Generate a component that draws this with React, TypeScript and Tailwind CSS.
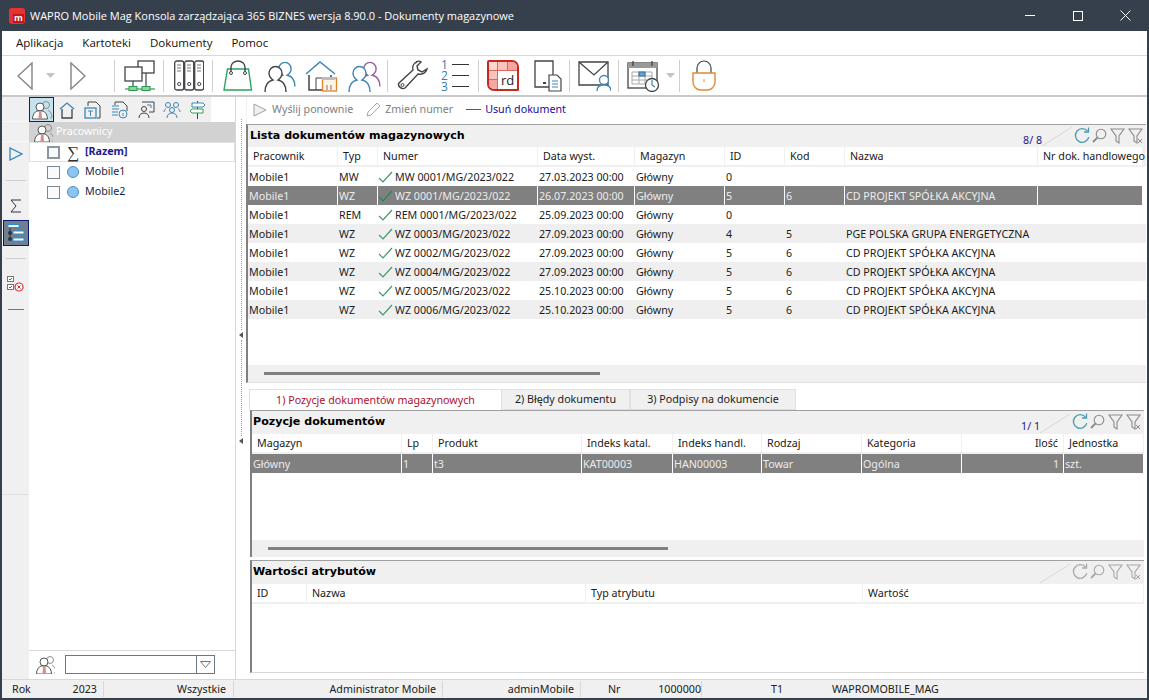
import type { ReactNode } from "react";

const ink = "#404448";
const blue = "#3d86b5";

function Svg({ w, h, className, children }: { w: number; h: number; className?: string; children: ReactNode }) {
  return (
    <svg width={w} height={h} viewBox={`0 0 ${w} ${h}`} fill="none" className={`shrink-0 ${className ?? ""}`}>
      {children}
    </svg>
  );
}

function Sep({ className }: { className: string }) {
  return <div className={`w-px h-[32px] bg-[#cfcfcf] shrink-0 ${className}`} />;
}

function Person({ x, y, s = 1, stroke = ink, bg = "#fff" }: { x: number; y: number; s?: number; stroke?: string; bg?: string }) {
  return (
    <g transform={`translate(${x} ${y}) scale(${s})`} stroke={stroke} strokeWidth={1.4 / s}>
      <path d="M1 28c0-7 3-11 8-12 -3-2-4-4-4-7a6.500 6.500 0 0 1 13 0c0 3-1 5-4 7 5 1 8 5 8 12" fill={bg} />
    </g>
  );
}

function Funnel({ x, color }: { x: number; color: string }) {
  return <path d={`M${x} 3h13l-5 7v7l-3-2v-5z`} stroke={color} strokeWidth="1.1" />;
}

function PanelTools({ color, refresh }: { color: string; refresh: string }) {
  return (
    <Svg w={74} h={20}>
      <path d="M15.500 5.200a6.800 6.800 0 1 0 1.300 6" stroke={refresh} strokeWidth="1.300" />
      <path d="M16.500 1.500v4.500h-4.500" stroke={refresh} strokeWidth="1.300" />
      <circle cx="29" cy="8" r="4.800" stroke={color} strokeWidth="1.100" />
      <path d="M25.500 11.500l-4.500 4.500" stroke={color} strokeWidth="1.800" />
      <Funnel x={39} color={color} />
      <Funnel x={57} color={color} />
      <path d="M66 13l4 4M70 13l-4 4" stroke={color} strokeWidth="1" />
    </Svg>
  );
}

function PanelTitle({ title, count, toolColor, refresh, pad }: { title: string; count?: string; toolColor: string; refresh: string; pad: string }) {
  return (
    <div className={`shrink-0 bg-[#f0f0f0] flex items-center ${pad}`}>
      <span className="font-['DejaVu_Sans'] font-bold text-[11.100px] text-black">{title}</span>
      <div className="ml-auto flex items-center">
        {count && <span className="text-[#1a1a8c] mt-[9px]">{count}</span>}
        <Svg w={30} h={21}>
          <path d="M0 21L30 2" stroke="#d8d8d8" />
        </Svg>
        <PanelTools color={toolColor} refresh={refresh} />
      </div>
    </div>
  );
}

type Col = { label: string; width: string; right?: boolean };

function HeaderRow({ cols }: { cols: Col[] }) {
  return (
    <div className="flex h-[21px] shrink-0 bg-[#f0f0f0] gap-px pb-[2px] pt-[1px]">
      {cols.map((c) => (
        <div key={c.label} className={`${c.width} shrink-0 bg-white flex items-center pl-[5px] whitespace-nowrap text-[#202020] ${c.right ? "justify-end pr-[5px]" : ""}`}>
          {c.label}
        </div>
      ))}
    </div>
  );
}

function Check({ selected }: { selected?: boolean }) {
  return (
    <svg width="16" height="12" viewBox="0 0 16 12" fill="none" className="shrink-0 -ml-[1px] mr-[1px]">
      <path d="M1 7l4 4 9-10" stroke={selected ? "#1f8a4c" : "#3f9a68"} strokeWidth="1.200" />
    </svg>
  );
}

const docCols: Col[] = [
  { label: "Pracownik", width: "w-[89px]" },
  { label: "Typ", width: "w-[39px]" },
  { label: "Numer", width: "w-[159px]" },
  { label: "Data wyst.", width: "w-[96px]" },
  { label: "Magazyn", width: "w-[89px]" },
  { label: "ID", width: "w-[59px]" },
  { label: "Kod", width: "w-[59px]" },
  { label: "Nazwa", width: "w-[192px]" },
  { label: "Nr dok. handlowego", width: "w-[104px]" },
];

const docs = [
  ["MW", "MW 0001/MG/2023/022", "27.03.2023 00:00", "0", "", ""],
  ["WZ", "WZ 0001/MG/2023/022", "26.07.2023 00:00", "5", "6", "CD PROJEKT SPÓŁKA AKCYJNA"],
  ["REM", "REM 0001/MG/2023/022", "25.09.2023 00:00", "0", "", ""],
  ["WZ", "WZ 0003/MG/2023/022", "27.09.2023 00:00", "4", "5", "PGE POLSKA GRUPA ENERGETYCZNA"],
  ["WZ", "WZ 0002/MG/2023/022", "27.09.2023 00:00", "5", "6", "CD PROJEKT SPÓŁKA AKCYJNA"],
  ["WZ", "WZ 0004/MG/2023/022", "27.09.2023 00:00", "5", "6", "CD PROJEKT SPÓŁKA AKCYJNA"],
  ["WZ", "WZ 0005/MG/2023/022", "25.10.2023 00:00", "5", "6", "CD PROJEKT SPÓŁKA AKCYJNA"],
  ["WZ", "WZ 0006/MG/2023/022", "25.10.2023 00:00", "5", "6", "CD PROJEKT SPÓŁKA AKCYJNA"],
];

const posCols: Col[] = [
  { label: "Magazyn", width: "w-[149px]" },
  { label: "Lp", width: "w-[30px]" },
  { label: "Produkt", width: "w-[148px]" },
  { label: "Indeks katal.", width: "w-[90px]" },
  { label: "Indeks handl.", width: "w-[88px]" },
  { label: "Rodzaj", width: "w-[99px]" },
  { label: "Kategoria", width: "w-[99px]" },
  { label: "Ilość", width: "w-[101px]", right: true },
  { label: "Jednostka", width: "w-[79px]" },
];

const attrCols: Col[] = [
  { label: "ID", width: "w-[54px]" },
  { label: "Nazwa", width: "w-[278px]" },
  { label: "Typ atrybutu", width: "w-[276px]" },
  { label: "Wartość", width: "w-[280px]" },
];

function ScrollStrip({ bar }: { bar: string }) {
  return (
    <div className="h-[17px] shrink-0 bg-[#f0f0f0] flex items-center">
      <div className={`h-[3px] bg-[#808080] ${bar}`} />
    </div>
  );
}

function Cell({ width, children, selected, right }: { width: string; children?: ReactNode; selected?: boolean; right?: boolean }) {
  return (
    <div className={`${width} shrink-0 h-full flex items-center px-[1px] pt-[1px] whitespace-nowrap overflow-hidden ${selected ? "bg-[#808080] text-[#ececec]" : ""} ${right ? "justify-end pr-[4px]" : ""}`}>
      {children}
    </div>
  );
}

function DocRow({ row, index }: { row: string[]; index: number }) {
  const selected = index === 1;
  const striped = index === 3 || index === 5 || index === 7;
  return (
    <div className={`flex h-[19px] gap-px ${striped ? "bg-[#efefef]" : ""}`}>
      <Cell width="w-[89px]" selected={selected}>Mobile1</Cell>
      <Cell width="w-[39px]" selected={selected}>{row[0]}</Cell>
      <Cell width="w-[159px]" selected={selected}><Check selected={selected} />{row[1]}</Cell>
      <Cell width="w-[96px]" selected={selected}>{row[2]}</Cell>
      <Cell width="w-[89px]" selected={selected}>Główny</Cell>
      <Cell width="w-[59px]" selected={selected}>{row[3]}</Cell>
      <Cell width="w-[59px]" selected={selected}>{row[4]}</Cell>
      <Cell width="w-[192px]" selected={selected}>{row[5]}</Cell>
      <Cell width="w-[104px]" selected={selected} />
    </div>
  );
}

function TreeRow({ label, bold }: { label: string; bold?: boolean }) {
  return (
    <div className={`h-[20px] flex items-center ${bold ? "border border-[#e0e0e0] text-[#1a1a8c] font-bold pl-[17px]" : "pl-[18px] text-[#1d1d3c]"}`}>
      <div className={`w-[13px] h-[13px] bg-[#fafafa] shrink-0 ${bold ? "border-2 border-[#8c96a3]" : "border border-[#7c8794]"}`} />
      {bold ? (
        <span className="w-[12px] ml-[7px] mr-[6px] text-[17px] leading-none text-[#333] font-normal font-['Liberation_Serif']">∑</span>
      ) : (
        <span className="w-[12px] h-[12px] ml-[7px] mr-[6px] rounded-full bg-[#8cc6f0] border border-[#4a90c4] shrink-0" />
      )}
      <span className="mb-[1px]">{label}</span>
    </div>
  );
}

function SideIcon({ w = 22, h = 22 }: { w?: number; h?: number }) {
  return (
    <Svg w={w} h={h}>
      <circle cx="15" cy="6" r="3.500" stroke="#8d8d8d" strokeWidth="1" />
      <path d="M19 19c1 0 2 0 2-1 0-3-2-6-4-7" stroke="#8d8d8d" />
      <circle cx="9" cy="8" r="4" fill="#fff" stroke="#555" strokeWidth="1" />
      <path d="M1.500 20c0-4 2-7 4.500-8h6c2.500 1 4.500 4 4.500 8z" fill="#fff" stroke="#555" strokeWidth="1" />
      <path d="M8 13h2.500l.5 6-1.800 1.500L7.500 19z" fill="#e08a8a" />
    </Svg>
  );
}

function Toolbar() {
  return (
    <div className="h-[40px] shrink-0 flex items-center bg-white border-t border-[#d8d8d8]">
      <Svg w={16} h={28} className="ml-[15px]">
        <path d="M15 1v26L1 14z" stroke="#8a8a8a" strokeWidth="1.500" />
      </Svg>
      <Svg w={9} h={5} className="ml-[13px]">
        <path d="M0 0h9l-4.500 5z" fill="#c4c4c4" />
      </Svg>
      <Svg w={16} h={28} className="ml-[15px]">
        <path d="M1 1v26l14-13z" stroke="#8a8a8a" strokeWidth="1.500" />
      </Svg>
      <Sep className="ml-[28px]" />
      <Svg w={32} h={32} className="ml-[9px]">
        <rect x="14" y="1" width="16" height="12" fill="#fff" stroke={ink} strokeWidth="1.300" />
        <rect x="1" y="7" width="17" height="14" fill="#fff" stroke={ink} strokeWidth="1.300" />
        <path d="M9 21v6M22 13v14" stroke={ink} strokeWidth="1.200" />
        <path d="M1 29h30" stroke="#2b9a4f" strokeWidth="1.200" />
        <rect x="5" y="26.500" width="8" height="4" fill="#8fd39f" stroke="#2b9a4f" />
        <rect x="18" y="26.500" width="8" height="4" fill="#8fd39f" stroke="#2b9a4f" />
      </Svg>
      <Sep className="ml-[7px]" />
      <Svg w={30} h={31} className="ml-[10px]">
        {[0, 10, 20].map((x) => (
          <g key={x}>
            <rect x={x + 0.7} y="1" width="9" height="29" rx="2" fill="#fff" stroke={ink} strokeWidth="1.300" />
            <path d={`M${x + 3} 5h4M${x + 3} 8h4M${x + 3} 11h4`} stroke="#777" />
            <circle cx={x + 5.2} cy="24" r="1.600" stroke={ink} />
          </g>
        ))}
      </Svg>
      <Sep className="ml-[8px]" />
      <Svg w={30} h={31} className="ml-[10px]">
        <path d="M4.500 9h21l3 21H1z" stroke="#2ba35f" strokeWidth="1.400" />
        <path d="M8 13V7a7 6 0 0 1 14 0v6" stroke={ink} strokeWidth="1.400" />
        <circle cx="8" cy="13" r="1.500" fill="#fff" stroke={ink} />
        <circle cx="22" cy="13" r="1.500" fill="#fff" stroke={ink} />
      </Svg>
      <Svg w={32} h={32} className="ml-[11px]">
        <Person x={10} y={0} s={0.95} stroke={blue} />
        <Person x={0} y={4} stroke={ink} />
      </Svg>
      <Svg w={33} h={32} className="ml-[9px]">
        <path d="M1 14L15 2l15 12" stroke={blue} strokeWidth="1.500" />
        <path d="M4 15v15h16M26 15v3" stroke={ink} strokeWidth="1.500" />
        <path d="M11 30V18h6" stroke={ink} strokeWidth="1" />
        <rect x="17.500" y="18" width="14" height="13" fill="#fdf3e6" stroke="#e0832c" strokeWidth="1.300" />
        <path d="M17 17h13v3H17z" fill="#bdbdbd" />
        <path d="M22 25v5M26 25v5" stroke="#777" />
      </Svg>
      <Svg w={33} h={32} className="ml-[10px]">
        <Person x={11} y={0} s={0.95} stroke="#9a5aa8" />
        <Person x={0} y={4} stroke={blue} />
      </Svg>
      <Sep className="ml-[6px]" />
      <Svg w={31} h={31} className="ml-[9px]">
        <path d="M20 2c-3 1-5 4-4 8L2 23c-2 3 3 7 6 5L21 14c4 1 8-1 9-5l-5 3-4-2-1-4 4-4c-1-1-3-1-5 0z" stroke={ink} strokeWidth="1.400" />
        <circle cx="5.500" cy="25" r="1.500" stroke={ink} />
      </Svg>
      <div className="ml-[13px] w-[28px] h-[33px] flex shrink-0">
        <span className="w-[8px] font-['Open_Sans'] text-[12px] leading-[11px] text-[#2f7fb0] break-all">1 2 3</span>
        <div className="ml-[3px] flex flex-col justify-around">
          <div className="h-px w-[17px] bg-[#333]" />
          <div className="h-px w-[17px] bg-[#333]" />
          <div className="h-px w-[17px] bg-[#333]" />
        </div>
      </div>
      <Sep className="ml-[9px]" />
      <div className="ml-[8px] w-[32px] h-[31px] shrink-0 border-2 border-[#c8281e] rounded-tr-[7px] rounded-bl-[7px] rounded-tl-[2px] rounded-br-[1px] bg-white grid grid-cols-3 grid-rows-3 overflow-hidden">
        <div className="bg-[#fbd6d2] border-r border-b border-[#e2655b]" />
        <div className="bg-[#f9c3be] border-r border-b border-[#e2655b]" />
        <div className="bg-[#f5a8a2] border-b border-[#e2655b]" />
        <div className="bg-[#f9c3be] border-r border-b border-[#e2655b]" />
        <div className="col-span-2 row-span-2 flex items-center justify-center font-['Open_Sans'] text-[13px] text-[#222]">rd</div>
        <div className="bg-[#f5a8a2] border-r border-[#e2655b]" />
      </div>
      <Svg w={28} h={32} className="ml-[15px]">
        <path d="M1 1h18v26H1z" stroke={ink} strokeWidth="1.300" />
        <path d="M9 23h3" stroke={ink} strokeWidth="2" />
        <path d="M15 15h8l4 4v12H15z" fill="#fff" stroke={ink} strokeWidth="1.200" />
        <path d="M18 21h6M18 24h6M18 27h6" stroke={blue} />
      </Svg>
      <Sep className="ml-[7px]" />
      <Svg w={33} h={31} className="ml-[8px]">
        <path d="M1 2h29v23H1z" stroke={ink} strokeWidth="1.300" />
        <path d="M1 2l15 13L30 2" stroke={ink} strokeWidth="1.300" />
        <circle cx="26" cy="20" r="4.500" fill="#fff" stroke={blue} strokeWidth="1.300" />
        <path d="M19 31c0-4 3-6 7-6s7 2 7 6" fill="#fff" stroke={blue} strokeWidth="1.300" />
      </Svg>
      <Sep className="ml-[7px]" />
      <Svg w={34} h={32} className="ml-[8px]">
        <rect x="1" y="3" width="29" height="25" stroke={ink} strokeWidth="1.300" />
        <path d="M1 3h29v5H1z" fill="#9a9a9a" />
        <path d="M6 1v5M25 1v5" stroke={ink} strokeWidth="1.300" />
        <path d="M5 12h20v12H5zM5 16h20M5 20h20M12 12v12M18 12v12" stroke="#a8a8a8" />
        <rect x="12" y="12" width="6" height="4" fill="#5fa5dc" stroke="#2f6fa5" />
        <circle cx="25" cy="25" r="6.500" fill="#fff" stroke={ink} strokeWidth="1.300" />
        <path d="M25 20v5l3 2" stroke={blue} strokeWidth="1.200" />
      </Svg>
      <Svg w={9} h={5} className="ml-[5px]">
        <path d="M0 0h9l-4.500 5z" fill="#c4c4c4" />
      </Svg>
      <Sep className="ml-[4px]" />
      <Svg w={24} h={31} className="ml-[12px]">
        <path d="M5 13V8a7 7 0 0 1 14 0v5" stroke={ink} strokeWidth="1.200" />
        <path d="M1 13h22v9a8 8 0 0 1-8 8H9a8 8 0 0 1-8-8z" fill="#fff" stroke="#e08a35" strokeWidth="1.400" />
        <path d="M12 19v3" stroke="#e08a35" />
      </Svg>
    </div>
  );
}

function TabIcons() {
  return (
    <div className="h-[25px] shrink-0 flex items-center bg-[#f0f0f0] mr-[24px]">
      <div className="w-[25px] h-[25px] bg-[#c5e2ee] border border-[#10206e] flex items-center justify-center">
        <SideIcon w={22} h={22} />
      </div>
      <Svg w={16} h={18} className="ml-[5px]">
        <path d="M1 8l7-6 7 6" stroke={blue} strokeWidth="1.300" />
        <path d="M3 8v9h10V8" stroke={ink} strokeWidth="1.300" />
      </Svg>
      <Svg w={17} h={18} className="ml-[9px]">
        <path d="M4 5V1h8l4 4v12h-3" stroke={ink} />
        <rect x="1" y="7" width="11" height="10" stroke={blue} strokeWidth="1.300" />
        <path d="M4 10h5M6.500 10v5" stroke={blue} />
      </Svg>
      <Svg w={17} h={18} className="ml-[10px]">
        <path d="M4 4V1h8l4 4v5" stroke={ink} />
        <path d="M1 5h7M1 8h7M1 11h6M1 14h6" stroke={blue} />
        <circle cx="12" cy="13" r="4" stroke={blue} />
        <path d="M12 12v3M12 10.500v.5" stroke={blue} />
      </Svg>
      <Svg w={18} h={18} className="ml-[9px]">
        <path d="M5 1h12v10h-5" stroke={ink} />
        <circle cx="7" cy="8" r="2.500" stroke={ink} />
        <path d="M2 17c0-3 2-5 5-5s5 2 5 5" stroke={ink} />
        <path d="M10 4h4v3" stroke={blue} />
      </Svg>
      <Svg w={18} h={18} className="ml-[8px]">
        <circle cx="5" cy="4" r="2.500" stroke={blue} />
        <circle cx="13" cy="4" r="2.500" stroke={blue} />
        <circle cx="9" cy="9" r="2.500" stroke={blue} />
        <path d="M1 11c0-2 1-3 2-3M17 11c0-2-1-3-2-3M4 17c0-3 2-5 5-5s5 2 5 5" stroke={blue} />
      </Svg>
      <Svg w={17} h={18} className="ml-[8px]">
        <path d="M8.500 0v18" stroke={ink} />
        <path d="M3 2h11l2 2-2 2H3z" fill="#fff" stroke={blue} />
        <path d="M14 8H3L1 10l2 2h11z" fill="#fff" stroke="#2ba35f" />
      </Svg>
    </div>
  );
}

function LeftStrip() {
  return (
    <div className="w-[27px] shrink-0 bg-[#f0f0f0] flex flex-col items-center">
      <div className="h-[25px] w-full border-b border-[#f8f8f8]" />
      <div className="h-[20px] w-full border-b border-[#f8f8f8]" />
      <Svg w={14} h={14} className="mt-[5px]">
        <path d="M1 1v12l12-6z" stroke="#2f86c0" strokeWidth="1.300" />
      </Svg>
      <div className="h-px w-[20px] bg-[#cfcfcf] mt-[19px]" />
      <Svg w={12} h={14} className="mt-[18px]">
        <path d="M11 1H1l5 6-5 6h10" stroke="#333" strokeWidth="1" />
      </Svg>
      <div className="w-[26px] h-[26px] mt-[7px] bg-[#708090] border border-[#0a1a70] flex items-center justify-center">
        <Svg w={18} h={20}>
          <path d="M1 1.500h11v3H1z" fill="#fff" stroke="#2590d8" />
          <path d="M6 8h11v3H6zM6 15h11v3H6z" fill="#fff" stroke="#2590d8" />
          <path d="M3 5v12" stroke="#333" />
          <circle cx="3" cy="10" r="2" fill="#333" />
          <circle cx="3" cy="16" r="2" fill="#333" />
        </Svg>
      </div>
      <div className="h-px w-[20px] bg-[#cfcfcf] mt-[12px]" />
      <Svg w={17} h={16} className="mt-[17px]">
        <rect x="0.500" y="0.500" width="6" height="5" fill="#fff" stroke="#777" />
        <rect x="0.500" y="8.500" width="6" height="5" fill="#fff" stroke="#777" />
        <path d="M2 3l1 1 2-2M2 11l1 1 2-2" stroke="#1f8a4c" />
        <circle cx="12" cy="11" r="4" fill="#fff" stroke="#d83030" strokeWidth="1.200" />
        <path d="M10.500 9.500l3 3M13.500 9.500l-3 3" stroke="#d83030" />
      </Svg>
      <div className="h-px w-[16px] bg-[#d05050] mt-[17px]" />
      <div className="h-px w-full bg-[#e0e0e0] mt-[184px]" />
    </div>
  );
}

function StatusBar() {
  return (
    <div className="h-[19px] shrink-0 bg-[#f0f0f0] border-t border-[#d8d8d8] flex items-center text-[#202020] whitespace-nowrap">
      <span className="w-[101px] flex justify-between pl-[10px] pr-[6px]"><span>Rok</span><span>2023</span></span>
      <div className="w-px h-[16px] bg-[#d8d8d8]" />
      <span className="w-[129px] text-right pr-[7px]">Wszystkie</span>
      <div className="w-px h-[16px] bg-[#d8d8d8]" />
      <span className="w-[208px] text-right pr-[6px]">Administrator Mobile</span>
      <div className="w-px h-[16px] bg-[#d8d8d8]" />
      <span className="w-[137px] text-right pr-[6px]">adminMobile</span>
      <div className="w-px h-[16px] bg-[#d8d8d8]" />
      <span className="w-[120px] flex justify-between pl-[27px]"><span>Nr</span><span>1000000</span></span>
      <div className="w-px h-[16px] bg-[#d8d8d8]" />
      <span className="ml-[69px] w-[61px]">T1</span>
      <span>WAPROMOBILE_MAG</span>
    </div>
  );
}

export default function App() {
  return (
    <div className="w-[1149px] h-[700px] flex flex-col bg-white border-x-2 border-b-2 border-[#36404d] overflow-hidden font-['Noto_Sans',sans-serif] text-[10.700px] leading-none text-[#1c1c1c]">
      {/* title bar */}
      <div className="h-[31px] shrink-0 -mx-[2px] bg-[#36404d] flex items-center text-white text-[11px] font-['Open_Sans']">
        <div className="ml-[9px] w-[16px] h-[16px] rounded-[3px] bg-[#e53232] relative shrink-0">
          <span className="absolute right-[1px] bottom-[1px] w-[11px] h-[9px] bg-[#c01818] text-white text-[9px] leading-[8px] font-bold text-center">m</span>
        </div>
        <span className="ml-[5px]">WAPRO Mobile Mag Konsola zarządzająca 365 BIZNES wersja 8.90.0 - Dokumenty magazynowe</span>
        <div className="ml-auto flex items-center">
          <div className="h-px w-[10px] bg-white mr-[38px]" />
          <div className="w-[10px] h-[10px] border border-white mr-[37px]" />
          <Svg w={11} h={11} className="mr-[18px]">
            <path d="M0.500 0.500l10 10M10.500 0.500l-10 10" stroke="#fff" />
          </Svg>
        </div>
      </div>

      {/* menu */}
      <div className="h-[24px] shrink-0 flex items-center pl-[14px] gap-[19px] text-[11.500px] text-[#111] font-['Open_Sans']">
        <span>Aplikacja</span>
        <span>Kartoteki</span>
        <span>Dokumenty</span>
        <span>Pomoc</span>
      </div>

      <Toolbar />
      <div className="h-[2px] shrink-0 bg-[#c8c8c8]" />

      {/* main */}
      <div className="flex-1 min-h-0 flex">
        <LeftStrip />
        <div className="w-[207px] shrink-0 flex flex-col border-r border-[#d8d8d8]">
          <TabIcons />
          <div className="h-[20px] shrink-0 bg-[#d2d2d2] flex items-center pl-[4px] text-white gap-[3px]">
            <SideIcon w={20} h={20} />
            <span className="mb-[1px]">Pracownicy</span>
          </div>
          <TreeRow label="[Razem]" bold />
          <TreeRow label="Mobile1" />
          <TreeRow label="Mobile2" />
          <div className="mt-auto h-[29px] border-t border-[#d8d8d8] flex items-center pl-[6px] pb-[2px]">
            <SideIcon w={20} h={20} />
            <div className="ml-[10px] w-[150px] h-[19px] border border-[#66788a] flex justify-end bg-white">
              <div className="w-[18px] border-l border-[#66788a] flex items-center justify-center">
                <Svg w={11} h={7}>
                  <path d="M0.500 0.500h10l-5 6z" stroke="#66788a" />
                </Svg>
              </div>
            </div>
          </div>
        </div>

        {/* splitter */}
        <div className="w-[10px] shrink-0 flex flex-col items-center text-[#444]">
          <div className="w-px h-[211px] mt-[22px] border-l border-dotted border-[#999]" />
          <Svg w={4} h={6} className="my-[2px]"><path d="M4 0v6L0 3z" fill="#555" /></Svg>
          <div className="w-px h-[96px] border-l border-dotted border-[#999]" />
          <Svg w={4} h={6} className="my-[2px]"><path d="M4 0v6L0 3z" fill="#555" /></Svg>
        </div>

        {/* right */}
        <div className="flex-1 min-w-0 flex flex-col">
          <div className="h-[27px] shrink-0 flex items-center pl-[6px] pb-[2px] text-[#808080] border-l border-[#f0f0f0]">
            <Svg w={14} h={14}>
              <path d="M1 1v12l12-6z" fill="#f0f0f0" stroke="#a0a0a0" />
            </Svg>
            <span className="ml-[5px]">Wyślij ponownie</span>
            <Svg w={15} h={15} className="ml-[13px]">
              <path d="M1 14l1-4 9-9 3 3-9 9z" stroke="#a8a8a8" />
            </Svg>
            <span className="ml-[4px]">Zmień numer</span>
            <div className="ml-[13px] w-[15px] h-px bg-[#e02020]" />
            <span className="ml-[4px] text-[#1a0d9c]">Usuń dokument</span>
          </div>

          <div className="mr-[1px] h-[259px] shrink-0 flex flex-col border-t border-[#a0a0a0] border-l-2 border-l-[#808080] border-b border-b-[#e0e0e0]">
            <PanelTitle title="Lista dokumentów magazynowych" count="8/ 8" toolColor="#8b8b8b" refresh="#4a9ab0" pad="h-[21px] pl-[2px]" />
            <HeaderRow cols={docCols} />
            <div className="flex-1 min-h-0">
              {docs.map((row, i) => (
                <DocRow key={row[1]} row={row} index={i} />
              ))}
            </div>
            <ScrollStrip bar="ml-[16px] w-[336px]" />
          </div>

          {/* tabs */}
          <div className="h-[21px] mt-[6px] shrink-0 flex pl-[3px]">
            <div className="w-[252px] flex items-center justify-center bg-white border-t border-l border-[#e0e0e0] text-[#b01030]">1) Pozycje dokumentów magazynowych</div>
            <div className="w-[129px] flex items-center justify-center bg-[#f0f0f0] border border-[#e0e0e0]">2) Błędy dokumentu</div>
            <div className="w-[166px] flex items-center justify-center bg-[#f0f0f0] border border-[#e0e0e0]">3) Podpisy na dokumencie</div>
          </div>

          <div className="ml-[4px] mr-[3px] h-[147px] shrink-0 flex flex-col border-t border-[#a0a0a0] border-l-2 border-l-[#808080]">
            <PanelTitle title="Pozycje dokumentów" count="1/ 1" toolColor="#8b8b8b" refresh="#4a9ab0" pad="h-[22px] pl-[1px]" />
            <HeaderRow cols={posCols} />
            <div className="flex-1 min-h-0">
              <div className="flex h-[19px] gap-px">
                <Cell width="w-[149px]" selected>Główny</Cell>
                <Cell width="w-[30px]" selected>1</Cell>
                <Cell width="w-[148px]" selected>t3</Cell>
                <Cell width="w-[90px]" selected>KAT00003</Cell>
                <Cell width="w-[88px]" selected>HAN00003</Cell>
                <Cell width="w-[99px]" selected>Towar</Cell>
                <Cell width="w-[99px]" selected>Ogólna</Cell>
                <Cell width="w-[101px]" selected right>1</Cell>
                <Cell width="w-[79px]" selected>szt.</Cell>
              </div>
            </div>
            <ScrollStrip bar="ml-[16px] w-[400px]" />
          </div>

          <div className="ml-[4px] mr-[3px] mt-[3px] flex-1 min-h-0 mb-[6px] flex flex-col border-t border-[#a0a0a0] border-l-2 border-l-[#808080] border-b border-b-[#d8d8d8]">
            <PanelTitle title="Wartości atrybutów" toolColor="#a8a8a8" refresh="#a8a8a8" pad="h-[22px] pl-[1px]" />
            <HeaderRow cols={attrCols} />
          </div>
        </div>
      </div>

      <StatusBar />
    </div>
  );
}
